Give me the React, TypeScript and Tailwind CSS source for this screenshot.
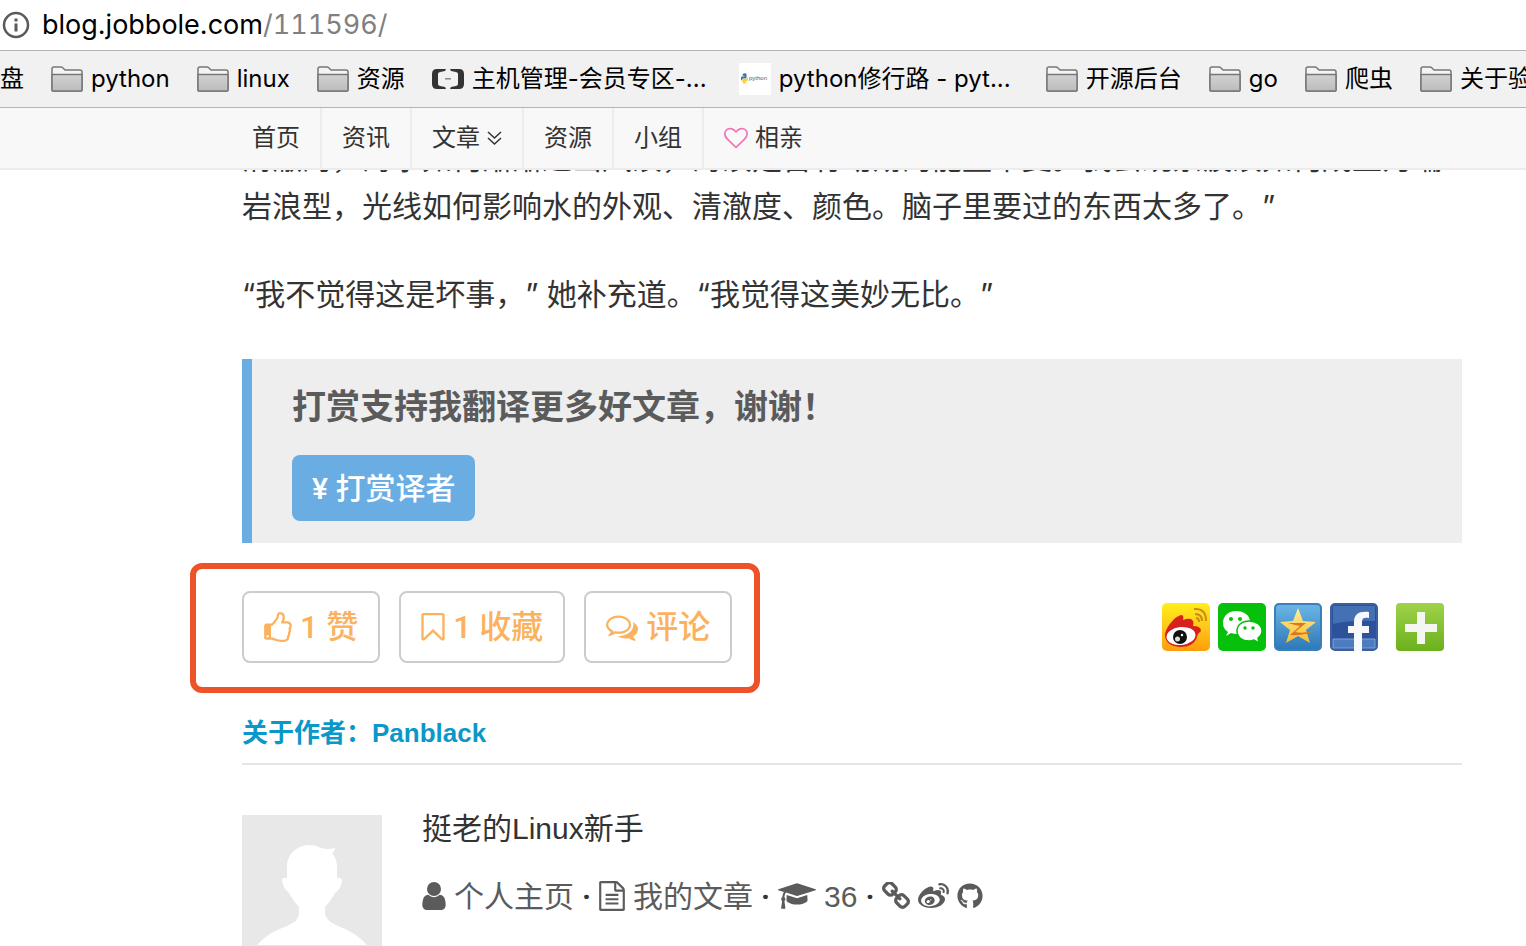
import React from 'react';
import { FaGithub, FaWeibo } from 'react-icons/fa';

const ICONS = {
  thumb:
    'M384 1344q0-26-19-45t-45-19-45 19-19 45 19 45 45 19 45-19 19-45zm1152-576q0-51-39-89.5t-89-38.5h-352q0-58 48-159.5t48-160.5q0-98-32-145t-128-47q-26 26-38 85t-30.5 125.5-59.5 109.5q-22 23-77 91-4 5-23 30t-31.5 41-34.5 42.5-40 44-38.5 35.5-40 27-35.5 9h-32v640h32q13 0 31.5 3t33 6.5 38 11 35 11.5 35.5 12.5 29 10.5q211 73 342 73h121q192 0 192-167 0-26-5-56 30-16 47.5-52.5t17.5-73.5-18-69q53-50 53-119 0-25-10-55.5t-25-47.5q32-1 53.5-47t21.5-81zm128-1q0 89-49 163 9 33 9 69 0 77-38 144 3 21 3 43 0 101-60 178 1 139-85 219.5t-227 80.5h-129q-96 0-189.5-22.5t-216.5-65.5q-116-40-138-40h-288q-53 0-90.5-37.5t-37.5-90.5v-640q0-53 37.5-90.5t90.5-37.5h274q36-24 137-155 58-75 107-128 24-25 35.5-85.5t30.5-126.5 62-108q39-37 90-37 84 0 151 32.5t102 101.5 35 186q0 93-48 192h176q104 0 180 76t76 179z',
  bookmark:
    'M1408 256h-1024v1242l423-406 89-85 89 85 423 406v-1242zm12-128q23 0 44 9 33 13 52.5 41t19.5 62v1289q0 34-19.5 62t-52.5 41q-19 8-44 8-48 0-83-32l-441-424-441 424q-36 33-83 33-23 0-44-9-33-13-52.5-41t-19.5-62v-1289q0-34 19.5-62t52.5-41q21-9 44-9h1048z',
  comments:
    'M704 384q-153 0-286 52t-211.5 141-78.5 191q0 82 53 158t149 132l97 56-35 84q34-20 62-39l44-31 53 10q78 14 153 14 153 0 286-52t211.5-141 78.5-191-78.5-191-211.5-141-286-52zm0-128q191 0 353.5 68.5t256.5 186.5 94 257-94 257-256.5 186.5-353.5 68.5q-86 0-176-16-124 88-278 128-36 9-86 16h-3q-11 0-20.5-8t-11.5-21q-1-3-1-6.5t.5-6.5 2-6l2.5-5t3.5-5.5 4-5 4.5-5 4-4.5q5-6 23-25t26-29.5 22.5-29 25-38.5 20.5-44q-124-72-195-177t-71-224q0-139 94-257t256.5-186.5 353.5-68.5zm822 1169q10 24 20.5 44t25 38.5 22.5 29 26 29.5 23 25q1 1 4 4.5t4.5 5 4 5 3.5 5.5l2.5 5t2 6 .5 6.5-1 6.5q-3 14-13 22t-22 7q-50-7-86-16-154-40-278-128-90 16-176 16-271 0-472-132 58 4 88 4 161 0 309-45t264-129q125-92 192-212t67-254q0-77-23-152 129 71 204 178t75 230q0 120-71 224.5t-195 176.5z',
  user: 'M1536 1399q0 109-62.5 187t-150.5 78h-854q-88 0-150.5-78t-62.5-187q0-85 8.5-160.5t31.5-152 58.5-131 94-89 134.5-34.5q131 128 313 128t313-128q76 0 134.5 34.5t94 89 58.5 131 31.5 152 8.5 160.5zm-256-887q0 159-112.5 271.5t-271.5 112.5-271.5-112.5-112.5-271.5 112.5-271.5 271.5-112.5 271.5 112.5 112.5 271.5z',
  file: 'M1596 380q28 28 48 76t20 88v1152q0 40-28 68t-68 28h-1344q-40 0-68-28t-28-68v-1600q0-40 28-68t68-28h896q40 0 88 20t76 48zm-444-244v376h376q-10-29-22-41l-313-313q-12-12-41-22zm384 1528v-1024h-416q-40 0-68-28t-28-68v-416h-768v1536h1280zm-1024-864q0-14 9-23t23-9h704q14 0 23 9t9 23v64q0 14-9 23t-23 9h-704q-14 0-23-9t-9-23v-64zm736 224q14 0 23 9t9 23v64q0 14-9 23t-23 9h-704q-14 0-23-9t-9-23v-64q0-14 9-23t23-9h704zm0 256q14 0 23 9t9 23v64q0 14-9 23t-23 9h-704q-14 0-23-9t-9-23v-64q0-14 9-23t23-9h704z',
  cap: 'M1774 836l18 316q4 69-82 128t-235 93.5-323 34.5-323-34.5-235-93.5-82-128l18-316 574 181q22 7 48 7t48-7zm530-324q0 23-22 31l-1120 352q-4 1-10 1t-10-1l-652-206q-43 34-71 111.5t-34 178.5q63 36 63 109 0 69-58 107l58 433q2 14-8 25-9 11-24 11h-192q-15 0-24-11-10-11-8-25l58-433q-58-38-58-107 0-73 65-111 11-207 98-330l-333-104q-22-8-22-31t22-31l1120-352q4-1 10-1t10 1l1120 352q22 8 22 31z',
  link: 'M1520 1216q0-40-28-68l-208-208q-28-28-68-28-42 0-72 32 3 3 19 18.5t21.5 21.5 15 19 13 25.5 3.5 27.5q0 40-28 68t-68 28q-15 0-27.5-3.5t-25.5-13-19-15-21.5-21.5-18.5-19q-33 31-33 73 0 40 28 68l206 207q27 27 68 27 40 0 68-26l147-146q28-28 28-67zm-703-705q0-40-28-68l-206-207q-28-28-68-28-39 0-68 27l-147 146q-28 28-28 67 0 40 28 68l208 208q27 27 68 27 42 0 72-31-3-3-19-18.5t-21.5-21.5-15-19-13-25.5-3.5-27.5q0-40 28-68t68-28q15 0 27.5 3.5t25.5 13 19 15 21.5 21.5 18.5 19q33-31 33-73zm895 705q0 120-85 203l-147 146q-83 83-203 83-121 0-204-85l-206-207q-83-83-83-203 0-123 88-209l-88-88q-86 88-208 88-120 0-204-84l-208-208q-84-84-84-204t85-203l147-146q83-83 203-83 121 0 204 85l206 207q83 83 83 203 0 123-88 209l88 88q86-88 208-88 120 0 204 84l208 208q84 84 84 204z',
  heart:
    'M1664 596q0-81-21.5-143t-55-98.5-81.5-59.5-94-31-98-8-112 25.5-110.5 64-86.5 72-60 61.5q-18 22-49 22t-49-22q-24-28-60-61.5t-86.5-72-110.5-64-112-25.5-98 8-94 31-81.5 59.5-55 98.5-21.5 143q0 168 187 355l581 560 580-559q188-188 188-356zm128 0q0 221-229 450l-623 600q-18 18-44 18t-44-18l-624-602q-10-8-27.5-26t-55.5-65.5-68-97.5-53.5-121-23.5-138q0-220 127-344t351-124q62 0 126.5 21.5t120 58 95.5 68.5 76 68q36-36 76-68t95.5-68.5 120-58 126.5-21.5q224 0 351 124t127 344z',
};

interface IconProps {
  name: keyof typeof ICONS;
  viewBox: string;
  className: string;
}

const Icon: React.FC<IconProps> = ({ name, viewBox, className }) => (
  <svg viewBox={viewBox} className={`shrink-0 fill-current ${className}`} aria-hidden="true">
    <path d={ICONS[name]} />
  </svg>
);

const FolderIcon = () => (
  <svg viewBox="0 0 32 26" className="h-[26px] w-8 shrink-0" aria-hidden="true">
    <defs>
      <linearGradient id="folder" x1="0" y1="0" x2="0" y2="1">
        <stop offset="0" stopColor="#d2d2d2" />
        <stop offset="1" stopColor="#bcbcbc" />
      </linearGradient>
    </defs>
    <path d="M1 24V3q0-2 2-2h7q1 0 2 1l2 2h15q2 0 2 2v18q0 1-1 1H2q-1 0-1-1z" fill="#f4f4f4" stroke="#777" strokeWidth="1.5" />
    <path d="M1 8.500h30V24q0 1-1 1H2q-1 0-1-1z" fill="url(#folder)" stroke="#777" strokeWidth="1.5" />
  </svg>
);

const BracketIcon = () => (
  <svg viewBox="0 0 32 22" className="h-[22px] w-8 shrink-0" aria-hidden="true">
    <path
      d="M14 1H5Q0 1 0 6v10q0 5 5 5h9l-1-2-5-1q-2-.5-2-2V6q0-1.500 2-2l5-1zM18 1h9q5 0 5 5v10q0 5-5 5h-9l1-2 5-1q2-.5 2-2V6q0-1.500-2-2l-5-1z"
      fill="#333"
    />
    <path d="M13 10h6v1.500h-6z" fill="#888" />
  </svg>
);

const PythonIcon = () => (
  <svg viewBox="0 0 32 32" className="size-8 shrink-0" aria-hidden="true">
    <rect width="32" height="32" fill="#fff" />
    <path d="M4.500 10.500q3-1 3 1v3q0 1-1.500 1H4q-1 0-1 2-1.500-.5-1-3 0-1 1.500-1h2v-.7H3.500q0-1.800 1-2.300z" fill="#3775a9" />
    <path d="M5.500 20.500q-2 0-2-1.500v-2q0-1.200 1.500-1.200h2q1 0 1-1.800 1.500.5 1 3-.2 1.200-1.500 1.200h-1.500v.7h1.500q0 1.600-2 1.600z" fill="#fc3" />
    <text x="10" y="17" fontSize="6" fontFamily="Liberation Sans" fill="#555">python</text>
  </svg>
);

interface Bookmark {
  label: string;
  icon: React.ReactNode;
  long?: boolean;
}

const bookmarks: Bookmark[] = [
  { label: '盘', icon: null },
  { label: 'python', icon: <FolderIcon /> },
  { label: 'linux', icon: <FolderIcon /> },
  { label: '资源', icon: <FolderIcon /> },
  { label: '主机管理-会员专区-...', icon: <BracketIcon />, long: true },
  { label: 'python修行路 - pyt...', icon: <PythonIcon />, long: true },
  { label: '开源后台', icon: <FolderIcon /> },
  { label: 'go', icon: <FolderIcon /> },
  { label: '爬虫', icon: <FolderIcon /> },
  { label: '关于验证', icon: <FolderIcon /> },
];

const BrowserBar = () => (
  <header className="shrink-0 font-[Inter,'Noto_Sans_CJK_SC',sans-serif] text-black">
    <div className="flex h-[50px] items-center gap-3 bg-white pl-[2px] text-[27px]">
      <svg viewBox="0 0 28 28" className="size-7 shrink-0" aria-hidden="true">
        <circle cx="14" cy="14" r="12" fill="none" stroke="#5a5a5a" strokeWidth="2.5" />
        <path d="M12.500 7.500h3v3h-3zM12.500 12.500h3v8h-3z" fill="#5a5a5a" />
      </svg>
      <span>
        blog.jobbole.com<span className="text-[#808080] tabular-nums">/111596/</span>
      </span>
    </div>
    <nav className="flex h-[58px] items-center gap-[27px] overflow-hidden border-y border-[#b4b4b4] bg-[#f1f1f1] text-2xl whitespace-nowrap">
      {bookmarks.map((item) => (
        <a key={item.label} href="#" className="flex shrink-0 items-center gap-2">
          {item.icon}
          <span className={item.long ? 'w-60' : ''}>{item.label}</span>
        </a>
      ))}
    </nav>
  </header>
);

const SiteNav = () => {
  const itemClass = 'flex items-center gap-[7px] px-5';
  return (
    <nav className="flex h-[62px] shrink-0 divide-x-2 divide-[#ececec] border-b-2 border-[#ececec] bg-[#f8f8f8] pl-[232px] text-2xl text-[#333]">
      <a href="#" className={itemClass}>首页</a>
      <a href="#" className={itemClass}>资讯</a>
      <a href="#" className={itemClass}>
        文章
        <svg viewBox="0 0 15 14" className="h-[14px] w-[15px]" fill="none" stroke="#333" strokeWidth="1.5" aria-hidden="true">
          <path d="M1 1l6.500 6L14 1M1 7l6.500 6L14 7" />
        </svg>
      </a>
      <a href="#" className={itemClass}>资源</a>
      <a href="#" className={itemClass}>小组</a>
      <a href="#" className={itemClass}>
        <Icon name="heart" viewBox="0 0 1792 1792" className="size-6 text-[#f472b6]" />
        相亲
      </a>
    </nav>
  );
};

const WeiboShare = () => (
  <svg viewBox="0 0 48 48" className="size-12" aria-hidden="true">
    <defs>
      <linearGradient id="wb" x1="0" y1="0" x2="0" y2="1">
        <stop offset="0" stopColor="#ffee1a" />
        <stop offset="0.5" stopColor="#ffc81a" />
        <stop offset="1" stopColor="#ff9d0a" />
      </linearGradient>
    </defs>
    <rect width="48" height="48" rx="5" fill="url(#wb)" />
    <path d="M3 33C3 24 14 12 20 12q2 1 1 5Q29 14 31 18q1 2 0 5 8 0 8 5-3 2-4 6-3 10-17 10Q4 43 3 33z" fill="#d8201c" />
    <ellipse cx="19" cy="33" rx="14.500" ry="9" fill="#fff" transform="rotate(-6 19 33)" />
    <circle cx="18" cy="34" r="7" fill="#111" />
    <circle cx="15.500" cy="36" r="2.500" fill="#ddd" />
    <circle cx="20" cy="32" r="1.200" fill="#fff" />
    <path d="M32 6q12-1 12 12M33 11q7 0 7 7M34 15q3 0 3 4" fill="none" stroke="#c98a1a" strokeWidth="2" />
  </svg>
);

const WechatShare = () => (
  <svg viewBox="0 0 48 48" className="size-12" aria-hidden="true">
    <rect width="48" height="48" rx="5" fill="#06c00b" />
    <path d="M18 8C10 8 5 13 5 20q0 6 5 9l-2 4 5-3q3 1 7 1l12-12C32 12 26 8 18 8z" fill="#fff" />
    <path d="M31 18c-7 0-12 4-12 10s5 10 12 10q2 0 5-1l5 3-1-5q4-3 4-7c0-6-6-10-13-10z" fill="#fff" stroke="#06c00b" strokeWidth="1.5" />
    <g fill="#06c00b">
      <circle cx="13" cy="16" r="2" />
      <circle cx="22" cy="16" r="2" />
      <circle cx="27" cy="25" r="1.700" />
      <circle cx="35" cy="25" r="1.700" />
    </g>
  </svg>
);

const QzoneShare = () => (
  <svg viewBox="0 0 48 48" className="size-12" aria-hidden="true">
    <defs>
      <linearGradient id="qz" x1="0" y1="0" x2="0" y2="1">
        <stop offset="0" stopColor="#6cb6e6" />
        <stop offset="1" stopColor="#2d78b8" />
      </linearGradient>
      <linearGradient id="star" x1="0" y1="0" x2="0" y2="1">
        <stop offset="0" stopColor="#fff0a0" />
        <stop offset="1" stopColor="#fbb92c" />
      </linearGradient>
    </defs>
    <rect x="1" y="1" width="46" height="46" rx="4" fill="url(#qz)" stroke="#3b7fb8" strokeWidth="2" />
    <path d="M24 5l5 13 13 1-10 8 4 13-12-7-12 7 4-13-10-8 13-1z" fill="url(#star)" />
    <path d="M14 20h18L21 29q10 2 20-2-8 6-25 5l10-9q-6-1-12-3z" fill="#d9781c" />
  </svg>
);

const FacebookShare = () => (
  <svg viewBox="0 0 48 48" className="size-12" aria-hidden="true">
    <rect x="1" y="1" width="46" height="46" rx="4" fill="#2d529c" stroke="#3c5f9f" strokeWidth="2" />
    <path d="M3 3h42v15Q20 17 3 21z" fill="#4470b4" />
    <path d="M3 36h42v9H3z" fill="#4d7cc0" stroke="#7fa3d6" strokeWidth="1" />
    <path d="M24 48V30h-6v-7h6v-4c0-8 5-11 15-10v6c-5-1-7 0-7 4v4h7v7h-7v18z" fill="#f6f8fb" />
  </svg>
);

const MoreShare = () => (
  <svg viewBox="0 0 48 48" className="size-12" aria-hidden="true">
    <defs>
      <linearGradient id="more" x1="0" y1="0" x2="0" y2="1">
        <stop offset="0" stopColor="#a0d24a" />
        <stop offset="1" stopColor="#6cb01c" />
      </linearGradient>
    </defs>
    <rect width="48" height="48" rx="4" fill="url(#more)" />
    <path d="M21 9h8v12h12v8H29v12h-8V29H9v-8h12z" fill="#f4f6f2" />
  </svg>
);

const shareClass = 'size-12 shrink-0';

const ActionRow = () => {
  const buttonClass =
    "flex h-[72px] items-center gap-2 rounded-lg border-2 border-[#ccc] bg-white px-5 font-[Roboto,'Noto_Sans_CJK_SC',sans-serif] font-medium";
  return (
    <section className="mt-12 flex items-center justify-between">
      <div className="relative flex gap-[19px] text-[32px] text-[#fbb25f]">
        <button className={buttonClass}>
          <Icon name="thumb" viewBox="128 0 1536 1664" className="h-[30px] w-7" />
          1 赞
        </button>
        <button className={buttonClass}>
          <Icon name="bookmark" viewBox="256 128 1280 1536" className="h-7 w-6" />
          1 收藏
        </button>
        <button className={buttonClass}>
          <Icon name="comments" viewBox="0 128 1792 1536" className="h-7 w-8" />
          评论
        </button>
        <div className="pointer-events-none absolute -top-7 -right-7 -bottom-[30px] -left-[52px] rounded-xl border-6 border-[#ee5228]" />
      </div>
      <div className="mr-[18px] flex gap-2">
        <button aria-label="微博" className={shareClass}><WeiboShare /></button>
        <button aria-label="微信" className={shareClass}><WechatShare /></button>
        <button aria-label="QQ空间" className={shareClass}><QzoneShare /></button>
        <button aria-label="Facebook" className={shareClass}><FacebookShare /></button>
        <button aria-label="更多" className={`ml-[10px] ${shareClass}`}><MoreShare /></button>
      </div>
    </section>
  );
};

const Dot = () => <span className="w-[9px] text-center font-[Roboto,sans-serif] font-bold text-[#333]">·</span>;

const AuthorCard = () => (
  <section>
    <h3 className="mt-12 border-b-2 border-[#e5e5e5] pb-2 text-[26px] leading-[44px] font-bold text-[#0a98c8]">
      关于作者：Panblack
    </h3>
    <div className="mt-[50px] flex gap-10">
      <svg viewBox="0 0 140 140" className="size-[140px] shrink-0" aria-hidden="true">
        <rect width="140" height="140" fill="#e8e8e8" />
        <path
          d="M15 130Q25 118 45 111 57 106 57 99V92Q52 87 47 78 40 72 40 64 41 62 45 63V52C45 38 56 30 68 30Q74 30 79 33 86 35 93 33 93 36 90 38 95 44 95 52V63Q100 62 100 66 99 74 93 78 88 87 83 92V99Q84 106 96 111 115 118 125 130z"
          fill="#fff"
        />
      </svg>
      <div className="text-[30px]">
        <p className="leading-7 text-[#333]">挺老的Linux新手</p>
        <div className="mt-[37px] flex h-8 items-center gap-2 text-[#5b5b5b]">
          <Icon name="user" viewBox="256 128 1280 1536" className="h-7 w-6" />
          <a href="#">个人主页</a>
          <Dot />
          <Icon name="file" viewBox="128 0 1536 1792" className="h-[30px] w-[26px]" />
          <a href="#">我的文章</a>
          <Dot />
          <Icon name="cap" viewBox="0 0 2304 1792" className="h-[30px] w-[38px]" />
          <span>36</span>
          <Dot />
          <Icon name="link" viewBox="80 80 1632 1632" className="size-7" />
          <FaWeibo className="size-[31px]" />
          <FaGithub className="size-[26px]" />
        </div>
      </div>
    </div>
  </section>
);

const App: React.FC = () => (
  <div className="flex h-screen flex-col overflow-hidden bg-white font-['Liberation_Sans','Noto_Sans_CJK_SC',sans-serif]">
    <BrowserBar />
    <SiteNav />
    <main className="min-h-0 flex-1 overflow-hidden pr-16 pl-[242px]">
      {/* scrolled so that the first line is half under the nav */}
      <article className="-mt-9 font-[Inter,'Noto_Sans_CJK_SC',sans-serif] text-[30px] leading-[48px] text-[#333] [text-spacing-trim:space-all]">
        <p>
          清澈的，海水如何渐渐退出风浪，海浪是否有动荡的能量平复。我会观察波浪如何成型为端岩浪型，光线如何影响水的外观、清澈度、颜色。脑子里要过的东西太多了。”
        </p>
        <p className="mt-10">“我不觉得这是坏事，” 她补充道。“我觉得这美妙无比。”</p>
      </article>
      <section className="mt-[41px] border-l-10 border-[#6aade2] bg-[#eee] px-10 pt-6 pb-[22px]">
        <h3 className="text-[34px] leading-[48px] font-bold text-[#5b5b5b]">打赏支持我翻译更多好文章，谢谢！</h3>
        <button className="mt-6 h-[66px] rounded-lg bg-[#6aade2] px-5 font-[Roboto,'Noto_Sans_CJK_SC',sans-serif] text-[30px] font-medium text-white">
          ¥ 打赏译者
        </button>
      </section>
      <ActionRow />
      <AuthorCard />
    </main>
  </div>
);

export default App;
